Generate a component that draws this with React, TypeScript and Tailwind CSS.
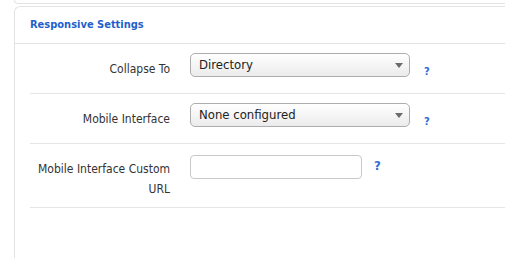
const FONT = "font-['DejaVu_Sans_Condensed','DejaVu_Sans',sans-serif]";

function Help({ className = '' }: { className?: string }) {
  return (
    <span className={`font-bold text-[11px] leading-none text-[#2f6bd6] ${className}`}>?</span>
  );
}

function SelectBox({ value }: { value: string }) {
  return (
    <div className="relative flex h-[24px] w-[220px] items-center rounded-[5px] border border-[#adadad] bg-gradient-to-b from-white to-[#ebebeb] pl-[8px] text-[13px] text-[#222]">
      {value}
      <span className="absolute right-[6px] top-[9px] h-0 w-0 border-x-[4px] border-t-[5px] border-x-transparent border-t-[#6b6b6b]" />
    </div>
  );
}

function Row({ label, children, last }: { label: string; children: React.ReactNode; last?: boolean }) {
  return (
    <div className={`flex items-start border-b border-[#e6e6e6] ${last ? 'h-[64px]' : 'h-[50px]'}`}>
      <div className="mt-[15px] w-[140px] text-right text-[12px] leading-[20px] text-[#333]">{label}</div>
      <div className={`ml-[20px] flex ${last ? 'mt-[11px]' : 'mt-[9px]'}`}>{children}</div>
    </div>
  );
}

export default function App() {
  return (
    <div className={`h-[258px] w-full overflow-hidden bg-white pl-[14px] ${FONT}`}>
      <div className="h-[4px] rounded-bl-[6px] border-b border-l border-[#e3e3e3]" />
      <div className="mt-[2px] h-[260px] rounded-tl-[6px] border-l border-t border-[#e3e3e3]">
        <div className="flex h-[37px] items-center border-b border-[#e3e3e3] pl-[15px] text-[11px] font-bold text-[#1f5fcc]">
          Responsive Settings
        </div>
        <div className="ml-[15px]">
          <Row label="Collapse To">
            <SelectBox value="Directory" />
            <Help className="ml-[14px] self-end" />
          </Row>
          <Row label="Mobile Interface">
            <SelectBox value="None configured" />
            <Help className="ml-[14px] self-end" />
          </Row>
          <Row label="Mobile Interface Custom URL" last>
            <input className="h-[24px] w-[172px] rounded-[4px] border border-[#c8c8c8] bg-white outline-none" />
            <Help className="ml-[12px] mt-[4px] text-[13px]" />
          </Row>
        </div>
      </div>
    </div>
  );
}
